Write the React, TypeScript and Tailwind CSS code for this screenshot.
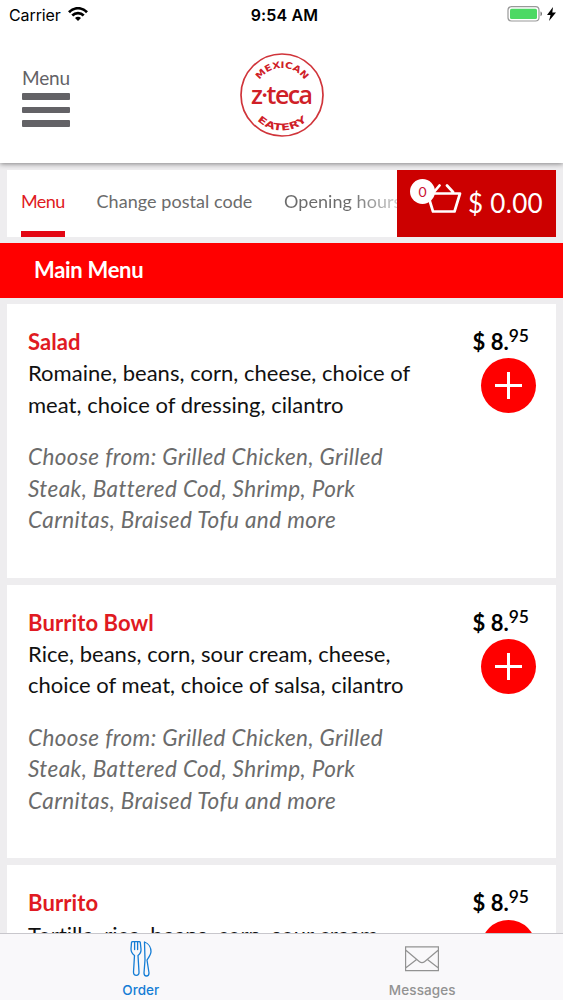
import React from 'react';

interface Dish {
  name: string;
  description: string[];
}

const dishes: Dish[] = [
  {
    name: 'Salad',
    description: ['Romaine, beans, corn, cheese, choice of', 'meat, choice of dressing, cilantro'],
  },
  {
    name: 'Burrito Bowl',
    description: ['Rice, beans, corn, sour cream, cheese,', 'choice of meat, choice of salsa, cilantro'],
  },
  {
    name: 'Burrito',
    description: ['Tortilla, rice, beans, corn, sour cream,'],
  },
];

const options = ['Choose from: Grilled Chicken, Grilled', 'Steak, Battered Cod, Shrimp, Pork', 'Carnitas, Braised Tofu and more'];

const StatusBar: React.FC = () => (
  <div className="grid h-[29px] grid-cols-3 items-center px-[9px] font-['Inter',sans-serif] text-[16px] text-black">
    <div className="flex items-center gap-[7px]">
      <span className="tracking-[-0.1px]">Carrier</span>
      <svg className="-mt-[2px]" width="20" height="14" viewBox="0 0 20 14" fill="none" stroke="black" strokeWidth="2.7">
        <path d="M1 5.2C6-.1 14-.1 19 5.2" />
        <path d="M4.3 8.5c3.1-3.1 8.3-3.1 11.4 0" />
        <path d="M7 10.9c1.7-1.5 4.3-1.5 6 0L10 14z" fill="black" stroke="none" />
      </svg>
    </div>
    <span className="pl-[6px] text-center text-[16px] font-semibold tracking-[0.15px]">9:54 AM</span>
    <div className="-mr-[2px] -mt-[2px] flex items-center justify-end gap-[4px]">
      <svg width="36" height="16" viewBox="0 0 36 16">
        <rect x="1" y=".7" width="31" height="14.3" rx="3.5" fill="white" stroke="#999" strokeWidth="1.2" />
        <rect x="3" y="2.7" width="27" height="10.3" rx="1.5" fill="#4cd964" />
        <path d="M33.5 5.5c2 .7 2 4 0 4.7z" fill="#777" />
      </svg>
      <svg width="9" height="14" viewBox="0 0 9 14">
        <path d="M6 0 0 8h3.5L2 14l7-8.5H5.3z" fill="black" />
      </svg>
    </div>
  </div>
);

const Logo: React.FC = () => (
  <svg width="86" height="86" viewBox="0 0 86 86" fill="#cf2027">
    <defs>
      <path id="top" d="M16 43a27 27 0 0 1 54 0" />
      <path id="bottom" d="M7.5 43a35.5 35.5 0 0 0 71 0" />
    </defs>
    <circle cx="43" cy="43" r="41" fill="none" stroke="#d0343a" strokeWidth="1.7" />
    <g fontFamily="DejaVu Sans, sans-serif" fontSize="9" fontWeight="700" textAnchor="middle">
      <text>
        <textPath href="#top" startOffset="50%" textLength="53" lengthAdjust="spacingAndGlyphs">MEXICAN</textPath>
      </text>
      <text fontSize="9.5">
        <textPath href="#bottom" startOffset="50%" textLength="55" lengthAdjust="spacingAndGlyphs">EATERY</textPath>
      </text>
    </g>
    <text x="12" y="51.5" fontFamily="Open Sans, sans-serif" fontSize="25" fontWeight="600" textLength="62">z·teca</text>
  </svg>
);

const Header: React.FC = () => (
  <header className="bg-white shadow-[0_1px_5px_rgba(0,0,0,0.45)]">
    <StatusBar />
    <div className="relative flex h-[134px] justify-center">
      <button className="absolute left-[22px] top-[37px] w-[48px] text-left text-[#636266]">
        <span className="block text-[19px] leading-[24px] tracking-[-0.2px]">Menu</span>
        <span className="mt-[3px] flex flex-col gap-[7px]">
          <span className="h-[6.6px] rounded-[1px] bg-[#636266]" />
          <span className="h-[6.6px] rounded-[1px] bg-[#636266]" />
          <span className="h-[6.6px] rounded-[1px] bg-[#636266]" />
        </span>
      </button>
      <div className="mt-[23px]">
        <Logo />
      </div>
    </div>
  </header>
);

const TabBar: React.FC = () => (
  <nav className="mx-[7px] mt-[7px] flex h-[67px] bg-white text-[18px] text-[#6b6b6b]">
    <div className="flex w-[390px] shrink-0 overflow-hidden whitespace-nowrap pl-[14px] leading-[62px]">
      <span className="mr-[32px] h-[67px] w-[43.5px] shrink-0 border-b-[6px] border-[#e30613] tracking-[-0.6px] text-[#e01a22]">Menu</span>
      <span className="w-[187.5px] shrink-0 tracking-[0.05px]">Change postal code</span>
      <span className="bg-linear-to-r from-[#6b6b6b] from-55% to-[#d8d8d8] bg-clip-text tracking-[0.05px] text-transparent">Opening hours</span>
    </div>
    <div className="relative flex flex-1 items-center bg-[#cc0000] text-white">
      <span className="absolute left-[13px] top-[9px] flex size-[25px] items-center justify-center rounded-full bg-white text-[14px] text-[#cc1133]">0</span>
      <svg className="-mt-[10px] ml-[29px] shrink-0" width="36" height="30" viewBox="0 0 36 30" fill="none" stroke="white" strokeWidth="2.7" strokeLinecap="round" strokeLinejoin="round">
        <path d="M1.5 9.500h32.500L28.500 27.500H7zM8 8l5.500-6.500M27 8l-6-6.500" />
      </svg>
      <span className="ml-[6px] whitespace-nowrap text-[26px] tracking-[0.3px]">$ 0.00</span>
    </div>
  </nav>
);

const DishCard: React.FC<{ dish: Dish }> = ({ dish }) => (
  <article className="mx-[7px] mb-[7px] flex h-[273.7px] justify-between bg-white pl-[21px] pr-[20px] pt-[22px] text-[22px] leading-[31.3px]">
    <div className="whitespace-nowrap">
      <h3 className="font-bold tracking-[0.1px] text-[#e01a22]">{dish.name}</h3>
      <div className="tracking-[0.03px] text-[#111]">
        {dish.description.map((line) => (
          <p key={line}>{line}</p>
        ))}
      </div>
      <div className="mt-[21.5px] text-[22.5px] italic tracking-[0.4px] text-[#6b6b6b]">
        {options.map((line) => (
          <p key={line}>{line}</p>
        ))}
      </div>
    </div>
    <div className="flex flex-col items-end">
      <p className="mr-[7px] whitespace-nowrap font-bold text-black">
        $ 8.<span className="relative -top-[8px] text-[17.5px] font-semibold leading-none">95</span>
      </p>
      <button className="mt-[1px] flex size-[55px] items-center justify-center rounded-full bg-[#ff0000]">
        <svg width="27" height="27" viewBox="0 0 27 27" stroke="white" strokeWidth="3">
          <path d="M13.5 0v27M0 13.5h27" />
        </svg>
      </button>
    </div>
  </article>
);

const BottomBar: React.FC = () => (
  <footer className="absolute inset-x-0 bottom-0 grid h-[67px] grid-cols-2 border-t border-[#c8c7cc] bg-[#f9f8fa] font-['Inter',sans-serif] text-[13.5px] font-medium">
    <div className="flex flex-col items-center pt-[7px] text-[#157dd5]">
      <svg width="22" height="36" viewBox="0 0 22 36" fill="none" stroke="currentColor" strokeWidth="1.3" strokeLinejoin="round" strokeLinecap="round">
        <path d="M1.5 1.5 1 8c0 3 1.5 5 3.5 6.5L3.5 31c0 4.5 6 4.5 5.5 0L8 14.5C10 13 11.3 11 11 8l-.7-6.5q-.2-.8-1.2-.8H2.7q-1 0-1.2.8M4.6 1v7.5M7.6 1v7.5" />
        <path d="M14.5 1c4.5 1.500 6.500 6 6.500 9.500 0 3-2 5.500-4 8.500l2 13c0 4-5 4-5 0l1-13z" />
      </svg>
      <span className="mt-[4px] leading-[18px]">Order</span>
    </div>
    <div className="flex flex-col items-center pt-[12px] text-[#929292]">
      <svg width="34" height="26" viewBox="0 0 34 26" fill="none" stroke="currentColor" strokeWidth="1.2">
        <path d="M.6.9h32.800v23.800H.6zM.6 4l13.600 11.500q2.800 2.400 5.600 0L33.400 4M.6 22l11-8.500M33.400 22l-11-8.500" />
      </svg>
      <span className="mt-[9px] leading-[18px] tracking-[0.1px]">Messages</span>
    </div>
  </footer>
);

const App: React.FC = () => {
  return (
    <div className="relative h-[1000px] w-[563px] overflow-hidden bg-[#eeedef] font-['Lato',sans-serif]">
      <Header />
      <TabBar />
      <h2 className="mb-[6.5px] mt-[6px] h-[54.5px] bg-[#ff0000] pl-[34px] text-[22px] font-bold leading-[54px] tracking-[-0.3px] text-white">Main Menu</h2>
      {dishes.map((dish) => (
        <DishCard key={dish.name} dish={dish} />
      ))}
      <BottomBar />
    </div>
  );
};

export default App;
